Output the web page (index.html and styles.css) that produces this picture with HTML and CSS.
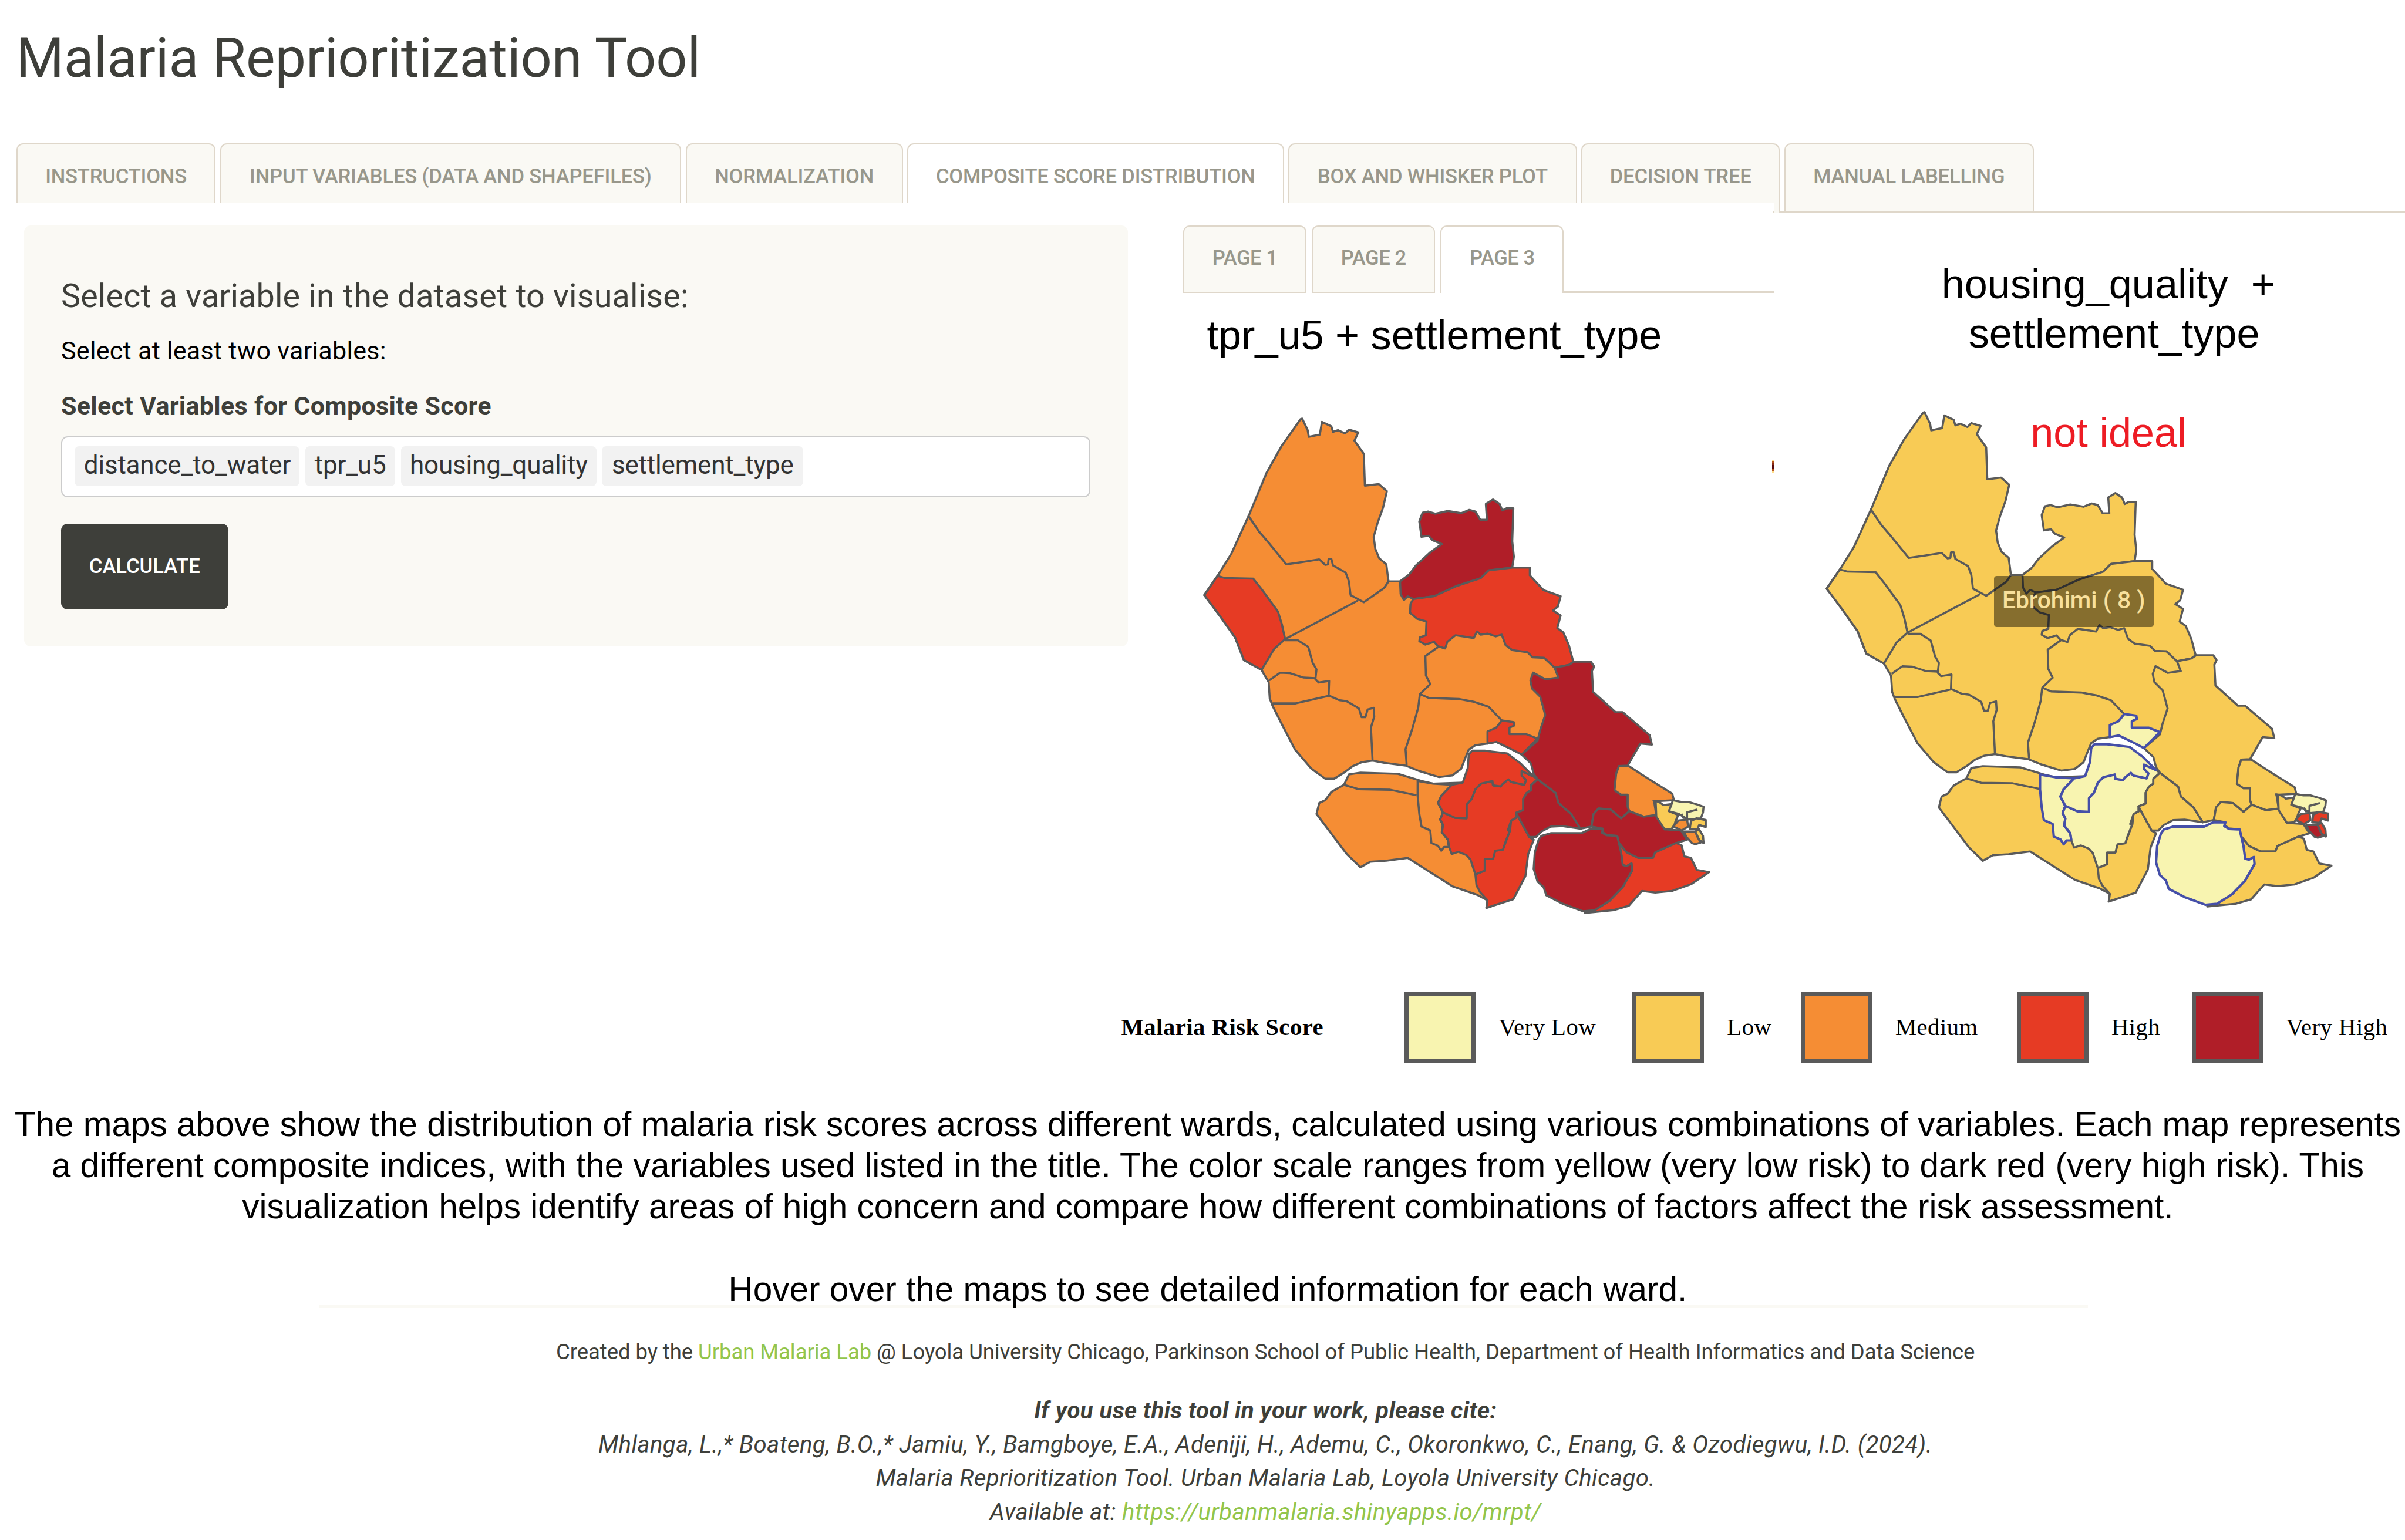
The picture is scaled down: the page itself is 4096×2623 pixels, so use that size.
FILE: index.html
```html
<!DOCTYPE html>
<html lang="en">
<head>
<meta charset="utf-8">
<title>Malaria Reprioritization Tool</title>
<link rel="stylesheet" href="styles.css">
</head>
<body>
<h1 class="title">Malaria Reprioritization Tool</h1>
<nav class="tabs">
  <a class="tab t1">INSTRUCTIONS</a>
  <a class="tab t2">INPUT VARIABLES (DATA AND SHAPEFILES)</a>
  <a class="tab t3">NORMALIZATION</a>
  <a class="tab t4 active">COMPOSITE SCORE DISTRIBUTION</a>
  <a class="tab t5">BOX AND WHISKER PLOT</a>
  <a class="tab t6">DECISION TREE</a>
  <a class="tab t7">MANUAL LABELLING</a>
  <i class="tabs-line"></i>
</nav>
<main class="main">
  <section class="panel">
    <h4 class="panel-title">Select a variable in the dataset to visualise:</h4>
    <p class="panel-text">Select at least two variables:</p>
    <label class="panel-label">Select Variables for Composite Score</label>
    <div class="select">
      <span class="tag g1">distance_to_water</span>
      <span class="tag g2">tpr_u5</span>
      <span class="tag g3">housing_quality</span>
      <span class="tag g4">settlement_type</span>
    </div>
    <button class="calc">CALCULATE</button>
  </section>
  <section class="map-col">
    <nav class="subtabs">
      <a class="subtab">PAGE 1</a>
      <a class="subtab">PAGE 2</a>
      <a class="subtab active">PAGE 3</a>
      <i class="subtabs-line"></i>
    </nav>
    <h3 class="map-title left">tpr_u5 + settlement_type</h3>
    <svg class="map map-a" viewBox="0 0 1067 950">
      <defs>
        <g id="wards">
          <path class="base" d="M208,31 218,52 220,64 240,60 244,37 261,45 264,55 273,52 286,58 293,51 310,56 303,71 320,95 322,153 347,150 362,163 355,193 345,221 338,246 341,268 348,285 361,296 365,327 387,327 520,330 640,420 690,480 720,600 609,642 590,633 561,619 545,622 523,625 511,633 504,650 497,668 481,680 457,683 421,672 396,662 357,657 336,653 316,656 300,663 284,675 266,686 250,686 225,668 195,633 171,587 154,553 149,540 147,510 134,488 102,470 86,429 57,388 30,352 54,317 79,277 111,207 143,130 171,80 205,32Z"/>
          <path class="line" d="M111,209 130,237 143,252 179,296 207,292 239,287 250,297 255,296 256,286 261,286 264,298 287,311 293,327 296,352 320,365 357,339 365,327M309,362 177,432M177,434 200,434 219,446 227,475 234,487 232,505 238,511 257,508 256,535M148,507 168,493 186,494 211,502 232,503M154,549 196,549 257,535 275,543 289,545 311,558 316,574 323,574 327,560 338,557 339,573 333,593 336,653M457,445 432,463 433,498 441,514 422,532 419,557 408,596 396,632 398,661M422,532 438,539 493,541 520,546 547,555 571,580"/>
          <path class="w-west" d="M54,317 68,321 119,322 134,341 164,382 171,405 177,432 157,450 134,488 102,470 86,429 57,388 30,352Z"/>
          <path class="w-north" d="M386,327 403,314 415,298 440,275 462,259 445,252 438,244 425,246 421,218 427,202 437,200 450,204 473,199 497,203 512,197 523,200 532,215 544,215 542,186 555,178 567,186 572,198 580,194 592,194 590,254 593,282 590,302 547,307 533,321 490,335 448,354 410,359 400,354 393,361 387,350Z"/>
          <path class="w-northeast" d="M590,302 622,302 622,316 647,343 678,354 673,373 664,380 678,389 672,412 683,420 693,443 701,473 693,479 667,484 648,466 627,465 618,456 590,452 578,443 571,424 560,427 545,422 533,424 526,418 520,430 487,425 472,437 468,449 455,445 448,437 432,442 421,436 422,429 433,425 434,400 417,395 404,384 405,368 410,359 448,354 490,335 533,321 547,307Z"/>
          <path class="w-east" d="M702,473 733,473 739,482 735,490 737,528 778,565 791,565 840,607 844,624 823,622 800,662 784,663 779,677 776,707 788,715 800,715 800,737 803,745 788,758 769,742 747,740 738,750 734,773 714,777 697,750 674,730 669,712 636,687 629,677 624,658 607,642 636,617 641,597 650,570 641,537 626,522 623,507 628,493 650,505 674,502 667,484 693,479Z"/>
          <path class="south" d="M284,697 293,678 314,675 382,677 425,690 446,695 500,693 540,700 600,748 621,792 600,850 543,921 545,907 526,897 482,882 400,830 361,835 332,837 314,847 289,823 234,750 239,730 250,725 261,710Z"/>
          <path class="line" d="M284,697 311,705 368,706 416,716"/>
          <path class="w-strip" d="M597,748 609,770 621,792 629,797 619,823 614,863 592,905 543,921 545,907 532,893 525,880 523,860 540,853 540,832 555,832 559,817 573,815 586,780 588,762 597,757Z"/>
          <path class="w-shore hot" d="M418,690 418,717 421,750 425,773 441,780 443,803 455,808 461,817 466,810 475,810 473,797 462,783 464,770 459,760 464,748 455,730 461,717 480,697 446,695Z"/>
          <path class="w-core" d="M464,747 486,757 507,758 507,733 516,723 523,705 533,695 554,690 555,698 569,700 573,695 583,687 588,692 612,697 615,688 607,680 607,672 629,682 636,687 624,698 624,707 616,712 610,723 610,743 597,748 597,757 588,762 582,780 586,780 578,800 573,815 559,817 555,832 540,832 540,853 523,860 514,833 507,825 492,819 480,823 475,810 473,797 462,783 464,770 459,760Z"/>
          <path class="line hot" d="M464,747 459,760 464,770 462,783 473,797 475,810"/>
          <path class="w-centre" d="M636,687 669,712 674,730 697,750 714,777 681,772 660,773 643,782 633,792 621,792 609,770 597,748 610,743 610,723 616,712 624,707 624,698Z"/>
          <path class="w-farm" d="M784,663 802,663 839,687 881,713 884,725 848,727 852,752 829,755 803,745 800,737 800,715 788,715 776,707 779,677Z"/>
          <path class="w-bank" d="M734,773 738,750 747,740 769,742 788,758 803,745 829,755 852,752 867,778 897,780 908,797 888,803 850,820 846,830 819,830 798,820 784,803 781,790 762,788 753,782 755,777Z"/>
          <path class="w-coast" d="M784,803 798,820 819,830 846,830 850,820 888,803 898,807 903,827 915,830 926,852 948,856 915,878 881,890 850,893 826,890 802,917 774,925 722,930 740,925 767,908 791,883 808,853 807,840 798,845 791,843 788,820Z"/>
          <path class="w-bend hot" d="M480,697 500,693 509,667 511,642 517,635 540,635 581,640 605,658 629,682 607,672 607,680 615,688 612,697 588,692 583,687 573,695 569,700 555,698 554,690 533,695 523,705 516,723 507,733 507,758 486,757 464,747 455,730 461,717Z"/>
          <path class="w-quay hot" d="M571,580 593,583 594,589 585,593 585,605 616,605 636,613 607,642 590,633 561,619 545,622 545,600 561,593Z"/>
          <path class="w-island hot" d="M643,790 660,785 716,785 733,777 755,777 753,784 762,789 781,790 784,803 788,820 791,843 798,845 807,840 808,853 791,883 767,908 740,925 719,927 681,913 652,898 647,883 636,873 629,850 631,820 638,797Z"/>
          <path class="c-west" d="M847,726 857,728 865,734 880,732 875,745 892,752 887,763 885,770 880,777 867,778 852,755 851,730Z"/>
          <path class="c-north" d="M880,732 882,725 897,728 910,728 927,733 938,737 937,747 933,758 910,760 893,750 875,745Z"/>
          <path class="line" d="M927,742 908,747 908,757 901,757 898,750"/>
          <path class="c-mid" d="M883,773 892,762 908,760 910,773 898,780Z"/>
          <path class="c-hook" d="M913,777 915,763 925,758 942,761 942,774 930,770 927,778Z"/>
          <path class="c-south" d="M902,782 923,782 927,792 933,802 923,805 917,803 907,792Z"/>
          <path class="c-hook" d="M923,782 930,778 937,790 938,803 930,797Z"/>
        </g>
      </defs>
      <use href="#wards"/>
    </svg>
    <i class="sliver"></i>
  </section>
  <section class="map-col second">
    <h3 class="map-title"><span class="line-a">housing_quality&nbsp; +</span><br><span class="line-b">settlement_type</span></h3>
    <svg class="map map-b" viewBox="0 0 1067 950"><use href="#wards"/></svg>
    <span class="note">not ideal</span>
    <span class="tip">Ebrohimi ( 8 )</span>
  </section>
</main>
<section class="legend">
  <b class="legend-title">Malaria Risk Score</b>
  <span class="key"><i class="sw s1"></i>Very Low</span>
  <span class="key"><i class="sw s2"></i>Low</span>
  <span class="key"><i class="sw s3"></i>Medium</span>
  <span class="key"><i class="sw s4"></i>High</span>
  <span class="key"><i class="sw s5"></i>Very High</span>
</section>
<p class="caption">The maps above show the distribution of malaria risk scores across different wards, calculated using various combinations of variables. Each map represents<br>a different composite indices, with the variables used listed in the title. The color scale ranges from yellow (very low risk) to dark red (very high risk). This<br>visualization helps identify areas of high concern and compare how different combinations of factors affect the risk assessment.<br><br>Hover over the maps to see detailed information for each ward.</p>
<footer class="footer">
  <p class="credit">Created by the <a>Urban Malaria Lab</a> @ Loyola University Chicago, Parkinson School of Public Health, Department of Health Informatics and Data Science</p>
  <p class="cite"><b>If you use this tool in your work, please cite:</b><br>Mhlanga, L.,* Boateng, B.O.,* Jamiu, Y., Bamgboye, E.A., Adeniji, H., Ademu, C., Okoronkwo, C., Enang, G. &amp; Ozodiegwu, I.D. (2024).<br>Malaria Reprioritization Tool. Urban Malaria Lab, Loyola University Chicago.<br>Available at: <a>https://urbanmalaria.shinyapps.io/mrpt/</a></p>
</footer>
</body>
</html>
```
FILE: styles.css
```css
/* 1rem = 100 design units */
html { font-size: 93.644px; }
* { box-sizing: border-box; }
body {
  margin: 0;
  width: 43.74rem;
  height: 28.01rem;
  overflow: hidden;
  position: relative;
  background: #fff;
  color: #3e3f3a;
  font-family: Roboto, "Liberation Sans", sans-serif;
  white-space: nowrap;
}
h1, h3, h4, p { margin: 0; font-weight: 400; }
i { display: block; }

.title { height: 2.61rem; padding: 0.51rem 0 0 0.29rem; font-size: 1rem; line-height: 1.1rem; letter-spacing: -0.001rem; }

.tabs { display: flex; gap: 0.08rem; align-items: flex-start; height: 1.26rem; padding-left: 0.3rem; }
.tab, .subtab {
  display: flex;
  justify-content: center;
  border: 0.03rem solid #dfd7ca;
  border-bottom: 0;
  border-radius: 0.12rem 0.12rem 0 0;
  background: #faf9f4;
  color: #98978b;
  font-size: 0.37rem;
  font-weight: 500;
  letter-spacing: -0.0022rem;
}
.tab { flex: none; height: 1.09rem; padding-top: 0.33rem; line-height: 0.5rem; }
.active { background: #fff; }
.t1 { width: 3.62rem; }
.t2 { width: 8.39rem; }
.t3 { width: 3.95rem; }
.t4 { width: 6.85rem; }
.t5 { width: 5.25rem; }
.t6 { width: 3.61rem; position: relative; }
.t6::after {
  content: "";
  position: absolute;
  right: -0.03rem;
  top: 1.04rem;
  width: 0.08rem;
  height: 0.19rem;
  background: #faf9f4;
  border-right: 0.03rem solid #dfd7ca;
}
.t7 { width: 4.54rem; height: 1.23rem; }
.tabs-line { flex: 1; height: 0.03rem; margin: 1.23rem 0 0 -4.82rem; background: #dfd7ca; }

.main { display: grid; grid-template-columns: 21.52rem 10.75rem 11.47rem; height: 13.93rem; }
.panel {
  width: 20.07rem;
  height: 7.66rem;
  margin: 0.23rem 0 0 0.44rem;
  padding: 0.97rem 0.68rem 0 0.67rem;
  border-radius: 0.12rem;
  background: #faf9f4;
}
.panel-title { font-size: 0.595rem; line-height: 0.62rem; letter-spacing: 0.0015rem; }
.panel-text { margin-top: 0.45rem; font-size: 0.46rem; line-height: 0.5rem; letter-spacing: 0.003rem; color: #000; }
.panel-label { display: block; margin-top: 0.5rem; font-size: 0.46rem; line-height: 0.5rem; letter-spacing: 0.003rem; font-weight: 700; }
.select {
  display: flex;
  gap: 0.1rem;
  height: 1.12rem;
  margin-top: 0.29rem;
  padding: 0.16rem 0.23rem;
  border: 0.03rem solid #ccc;
  border-radius: 0.12rem;
  background: #fff;
}
.tag { display: flex; justify-content: center; height: 0.73rem; border-radius: 0.08rem; background: #f2f2f2; color: #333; font-size: 0.47rem; line-height: 0.7rem; letter-spacing: -0.002rem; }
.g1 { width: 4.09rem; }
.g2 { width: 1.64rem; }
.g3 { width: 3.56rem; }
.g4 { width: 3.66rem; }
.calc {
  display: flex;
  justify-content: center;
  align-items: center;
  width: 3.04rem;
  height: 1.55rem;
  margin-top: 0.48rem;
  padding: 0 0 0.02rem;
  border: 0;
  border-radius: 0.12rem;
  background: #3e3f3a;
  color: #fff;
  font: 500 0.37rem/0.5rem Roboto, sans-serif;
}

.map-col { position: relative; }
.subtabs { display: flex; margin-top: 0.23rem; height: 1.23rem; gap: 0.1rem; }
.subtab { width: 2.24rem; border-bottom: 0.03rem solid #dfd7ca; padding-top: 0.32rem; line-height: 0.5rem; letter-spacing: -0.005rem; }
.subtab.active { border-bottom: 0; }
.subtabs-line { flex: 1; margin: 1.2rem 0 0 -0.1rem; height: 0.03rem; background: #dfd7ca; }
.map-title { color: #000; font: 0.75rem/0.9rem "Liberation Sans", sans-serif; text-align: center; }
.map-title.left { margin-top: 0.32rem; padding-left: 0.43rem; text-align: left; }
.second .map-title { margin-top: 0.85rem; padding-left: 0.78rem; }
.line-a { margin-right: 0.1rem; }
.line-b { margin-left: 0.11rem; }
.map { display: block; width: 10.67rem; height: 9.5rem; }
.map-a { margin: 0.75rem 0 0 0.08rem; }
.map-b { margin: 0.67rem 0 0 0.65rem; }
.sliver {
  position: absolute;
  left: 10.71rem;
  top: 4.49rem;
  width: 0.04rem;
  height: 0.24rem;
  background: linear-gradient(#fd8 0 15%, #b5541c 15% 28%, #8a2a14 28% 42%, #5a0c0c 42% 72%, #b5541c 72% 85%, #fd8 85%);
}
.note { position: absolute; left: 4.66rem; top: 3.55rem; color: #ed1c24; font: 0.75rem/0.9rem "Liberation Sans", sans-serif; }
.tip {
  position: absolute;
  left: 3.99rem;
  top: 6.61rem;
  display: flex;
  justify-content: center;
  width: 2.91rem;
  height: 0.93rem;
  border-radius: 0.05rem;
  background: rgba(0, 0, 0, 0.46);
  color: #f8e09c;
  font-size: 0.435rem;
  font-weight: 500;
  line-height: 0.88rem;
}

/* ward colours */
#wards path { stroke: #5a5a5a; stroke-width: 3.8; stroke-linejoin: round; }
#wards .line { fill: none; }
.map-a { --base: #f58d34; --red: #e63b24; --dark: #b01e28; --hot: #5a5a5a; }
.base, .south, .w-farm { fill: var(--base); }
.w-west, .w-northeast, .w-strip, .w-coast { fill: var(--red); }
.w-north, .w-east, .w-centre, .w-bank { fill: var(--dark); }
.w-core, .w-bend, .w-quay { fill: var(--core, #e63b24); }
.w-shore { fill: var(--core, #f58d34); }
.w-island { fill: var(--core, #b01e28); }
#wards .hot { stroke: var(--hot); stroke-width: var(--hot-width, 3.8); }
.c-west { fill: #f8cb55; }
.c-north { fill: #f8f4b0; }
.c-hook { fill: var(--chook, #f8cb55); }
.c-mid { fill: var(--chook, #f58d34); }
.c-south { fill: var(--csouth, #f58d34); }
.map-b { --base: #f8cb55; --red: #f8cb55; --dark: #f8cb55; --core: #f8f4b0; --hot: #454fa8; --hot-width: 4.4; --chook: #e63b24; --csouth: #b01e28; }

.legend {
  display: grid;
  grid-template-columns: 5.15rem 4.15rem 3.06rem 3.93rem 3.18rem 1fr;
  height: 1.8rem;
  padding: 0.245rem 0 0 20.39rem;
  color: #000;
  font: 0.435rem/1.28rem "Liberation Serif", serif;
  letter-spacing: 0.005rem;
}
.key { display: flex; gap: 0.42rem; }
.sw { width: 1.3rem; height: 1.28rem; border: 0.08rem solid #5a5a5a; }
.s1 { background: #f8f4b0; }
.s2 { background: #f8cb55; }
.s3 { background: #f58d34; }
.s4 { background: #e63b24; }
.s5 { background: #b01e28; }

.caption { padding: 0.475rem 0 0 0.19rem; height: 4.14rem; color: #000; font: 0.625rem/0.75rem "Liberation Sans", sans-serif; text-align: center; }
.footer { width: 32.17rem; margin-left: 5.8rem; padding: 0.5rem 0 0 2.26rem; border-top: 0.05rem solid #faf9f4; text-align: center; font-size: 0.39rem; line-height: 0.62rem; }
.footer a { color: #93c54b; }
.credit { letter-spacing: -0.0008rem; }
.cite { margin-top: 0.45rem; font-size: 0.43rem; line-height: 0.615rem; font-style: italic; letter-spacing: 0.004rem; }
```
